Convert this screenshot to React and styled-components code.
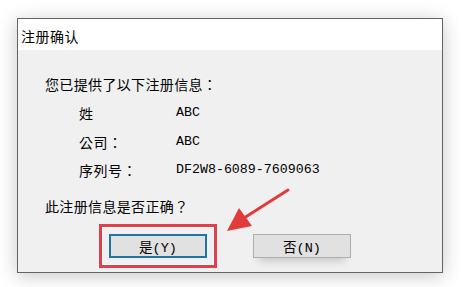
import React from "react";
import styled, { createGlobalStyle } from "styled-components";

const Global = createGlobalStyle`
  html, body { margin: 0; padding: 0; background: #ffffff; }
  body { font-family: "Liberation Mono", "Noto Sans CJK TC", monospace; color: #000; }
`;

const Page = styled.div`
  position: relative;
  width: 461px;
  height: 287px;
  padding: 18px 0 0 17px;
  box-sizing: border-box;
  overflow: hidden;
  background: #ffffff;
`;

const Dialog = styled.div`
  width: 426px;
  height: 255px;
  box-sizing: border-box;
  border: 1px solid #646464;
  background: #f0f0f0;
  box-shadow: 0 3px 18px rgba(0, 0, 0, 0.22);
  display: flex;
  flex-direction: column;
`;

const TitleBar = styled.div`
  height: 31px;
  background: #ffffff;
  display: flex;
  align-items: center;
  padding: 2px 0 0 3px;
  box-sizing: border-box;
  font-family: "Noto Sans CJK SC", sans-serif;
  font-size: 14px;
  letter-spacing: 0.5px;
`;

const Body = styled.div`
  flex: 1;
  padding: 24px 0 0 27px;
  display: flex;
  flex-direction: column;
  font-size: 14px;
`;

const Line = styled.div`
  font-family: "Noto Sans CJK TC", "Noto Sans CJK SC", sans-serif;
  font-size: 14px;
  line-height: 20px;
  letter-spacing: 0.35px;
  margin-bottom: ${(p) => p.$after || 0}px;
`;

const InfoGrid = styled.div`
  display: grid;
  grid-template-columns: 97px auto;
  row-gap: 8.5px;
  padding-left: 34px;
  margin-bottom: 16px;
`;

const Label = styled.div`
  font-family: "Noto Sans CJK TC", "Noto Sans CJK SC", sans-serif;
  font-size: 14px;
  line-height: 20px;
  letter-spacing: 0.5px;
`;

const Value = styled.div`
  font-family: "Liberation Mono", monospace;
  font-size: 13.3px;
  line-height: 20px;
`;

const Buttons = styled.div`
  display: flex;
  justify-content: center;
  gap: 46px;
  margin-left: -27px;
  padding-top: 1px;
`;

const Button = styled.button`
  width: 98px;
  height: 24px;
  box-sizing: border-box;
  margin: 0;
  padding: 0;
  background: #e1e1e1;
  border: ${(p) => (p.$default ? "2px solid #1f76a6" : "1px solid #adadad")};
  font-family: "Liberation Mono", "Noto Sans CJK SC", monospace;
  font-size: 13.5px;
  color: #000;
  display: flex;
  align-items: center;
  justify-content: center;
  outline: ${(p) => (p.$highlight ? "3px solid #e0404c" : "none")};
  outline-offset: 7px;
  box-shadow: ${(p) =>
    p.$highlight
      ? "0 0 0 6px #f0f0f0, 0 0 0 7px rgba(255,255,255,0.9)"
      : "0 9px 8px -6px rgba(0,0,0,0.18)"};
`;

const Arrow = styled.svg`
  position: absolute;
  left: 0;
  top: 0;
  pointer-events: none;
`;

export default function App() {
  return (
    <>
      <Global />
      <Page>
        <Dialog>
          <TitleBar>注册确认</TitleBar>
          <Body>
            <Line $after={9}>您已提供了以下注册信息：</Line>
            <InfoGrid>
              <Label>姓</Label>
              <Value>ABC</Value>
              <Label>公司：</Label>
              <Value>ABC</Value>
              <Label>序列号：</Label>
              <Value>DF2W8-6089-7609063</Value>
            </InfoGrid>
            <Line $after={17}>此注册信息是否正确？</Line>
            <Buttons>
              <Button $default $highlight>是(Y)</Button>
              <Button>否(N)</Button>
            </Buttons>
          </Body>
        </Dialog>
        <Arrow width="461" height="287" viewBox="0 0 461 287">
          <line x1="288" y1="190" x2="244" y2="218" stroke="#e23b3b" strokeWidth="3" strokeLinecap="round" />
          <polygon points="227,231 239,208 252,226" fill="#e23b3b" />
        </Arrow>
      </Page>
    </>
  );
}
